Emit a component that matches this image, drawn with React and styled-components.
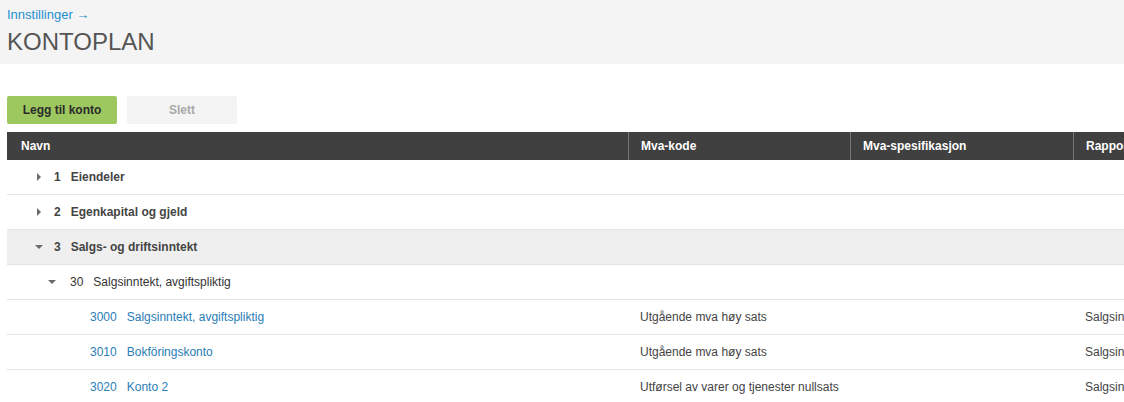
import React from 'react'
import styled, { createGlobalStyle } from 'styled-components'

const GlobalStyle = createGlobalStyle`
  html, body {
    margin: 0;
    padding: 0;
    background: #fff;
    font-family: "Liberation Sans", Arial, Helvetica, sans-serif;
    overflow: hidden;
  }
`

const Page = styled.div`
  width: 1124px;
  height: 402px;
  overflow: hidden;
`

const Header = styled.header`
  background: #f4f4f4;
  height: 64px;
  padding: 6px 7px 0;
  box-sizing: border-box;
`

const Crumb = styled.a`
  display: block;
  font-size: 13px;
  line-height: 18px;
  color: #1f8fcf;
  text-decoration: none;
`

const Title = styled.h1`
  margin: 3px 0 0;
  font-size: 24px;
  line-height: 30px;
  font-weight: 300;
  color: #555;
  letter-spacing: 0;
`

const Toolbar = styled.div`
  display: flex;
  gap: 10px;
  padding: 32px 7px 8px;
`

const Button = styled.button`
  width: 110px;
  height: 28px;
  border: none;
  border-radius: 2px;
  font-family: inherit;
  font-size: 12px;
  font-weight: bold;
  background: ${p => (p.$primary ? '#9dc75f' : '#f4f4f4')};
  color: ${p => (p.$primary ? '#2b2b2b' : '#a9a9a9')};
  cursor: pointer;
`

const Table = styled.div`
  margin-left: 7px;
  width: 1300px;
`

const cols = '621px 222px 223px 234px'

const HeadRow = styled.div`
  display: grid;
  grid-template-columns: ${cols};
  height: 28px;
  background: #404040;
`

const HeadCell = styled.div`
  display: flex;
  align-items: center;
  padding-left: ${p => (p.$first ? '14px' : '12px')};
  border-left: ${p => (p.$first ? 'none' : '1px solid #777')};
  color: #fff;
  font-size: 12px;
  font-weight: bold;
`

const Row = styled.div`
  display: grid;
  grid-template-columns: ${cols};
  height: 35px;
  border-bottom: 1px solid #e4e4e4;
  box-sizing: border-box;
  background: ${p => (p.$active ? '#efefef' : '#fff')};
  font-size: 12px;
`

const NameCell = styled.div`
  display: flex;
  align-items: center;
  padding-left: ${p => p.$indent}px;
  color: ${p => (p.$level === 3 ? '#2a7db5' : p.$level === 1 ? '#444' : '#333')};
  font-weight: ${p => (p.$level === 1 ? 'bold' : 'normal')};
`

const Caret = styled.span`
  width: 0;
  height: 0;
  margin-right: ${p => p.$gap}px;
  ${p =>
    p.$open
      ? `border-left: 4px solid transparent; border-right: 4px solid transparent; border-top: 4px solid #6a6a6a;`
      : `border-top: 4px solid transparent; border-bottom: 4px solid transparent; border-left: 4px solid #6a6a6a; margin-left: 2px;`}
`

const Num = styled.span`
  margin-right: ${p => p.$gap}px;
`

const Cell = styled.div`
  display: flex;
  align-items: center;
  padding-left: 12px;
  color: #444;
  white-space: nowrap;
  overflow: hidden;
`

const rows = [
  { level: 1, num: '1', name: 'Eiendeler', open: false },
  { level: 1, num: '2', name: 'Egenkapital og gjeld', open: false },
  { level: 1, num: '3', name: 'Salgs- og driftsinntekt', open: true, active: true },
  { level: 2, num: '30', name: 'Salgsinntekt, avgiftspliktig', open: true },
  { level: 3, num: '3000', name: 'Salgsinntekt, avgiftspliktig', mva: 'Utgående mva høy sats', rapport: 'Salgsinntekt' },
  { level: 3, num: '3010', name: 'Bokföringskonto', mva: 'Utgående mva høy sats', rapport: 'Salgsinntekt' },
  { level: 3, num: '3020', name: 'Konto 2', mva: 'Utførsel av varer og tjenester nullsats', rapport: 'Salgsinntekt' },
]

const indentFor = { 1: 28, 2: 41, 3: 83 }
const numGap = { 1: 10, 2: 10, 3: 10 }
const caretGap = { 1: { open: 11, closed: 13 }, 2: { open: 14, closed: 14 } }

export default function App() {
  return (
    <Page>
      <GlobalStyle />
      <Header>
        <Crumb href="#">Innstillinger →</Crumb>
        <Title>KONTOPLAN</Title>
      </Header>
      <Toolbar>
        <Button $primary>Legg til konto</Button>
        <Button>Slett</Button>
      </Toolbar>
      <Table>
        <HeadRow>
          <HeadCell $first>Navn</HeadCell>
          <HeadCell>Mva-kode</HeadCell>
          <HeadCell>Mva-spesifikasjon</HeadCell>
          <HeadCell>Rapportlinje</HeadCell>
        </HeadRow>
        {rows.map((r, i) => (
          <Row key={i} $active={r.active}>
            <NameCell $indent={indentFor[r.level]} $level={r.level}>
              {r.level < 3 && (
                <Caret $open={r.open} $gap={caretGap[r.level][r.open ? 'open' : 'closed']} />
              )}
              <Num $gap={numGap[r.level]}>{r.num}</Num>
              <span>{r.name}</span>
            </NameCell>
            <Cell>{r.mva}</Cell>
            <Cell />
            <Cell>{r.rapport}</Cell>
          </Row>
        ))}
      </Table>
    </Page>
  )
}
